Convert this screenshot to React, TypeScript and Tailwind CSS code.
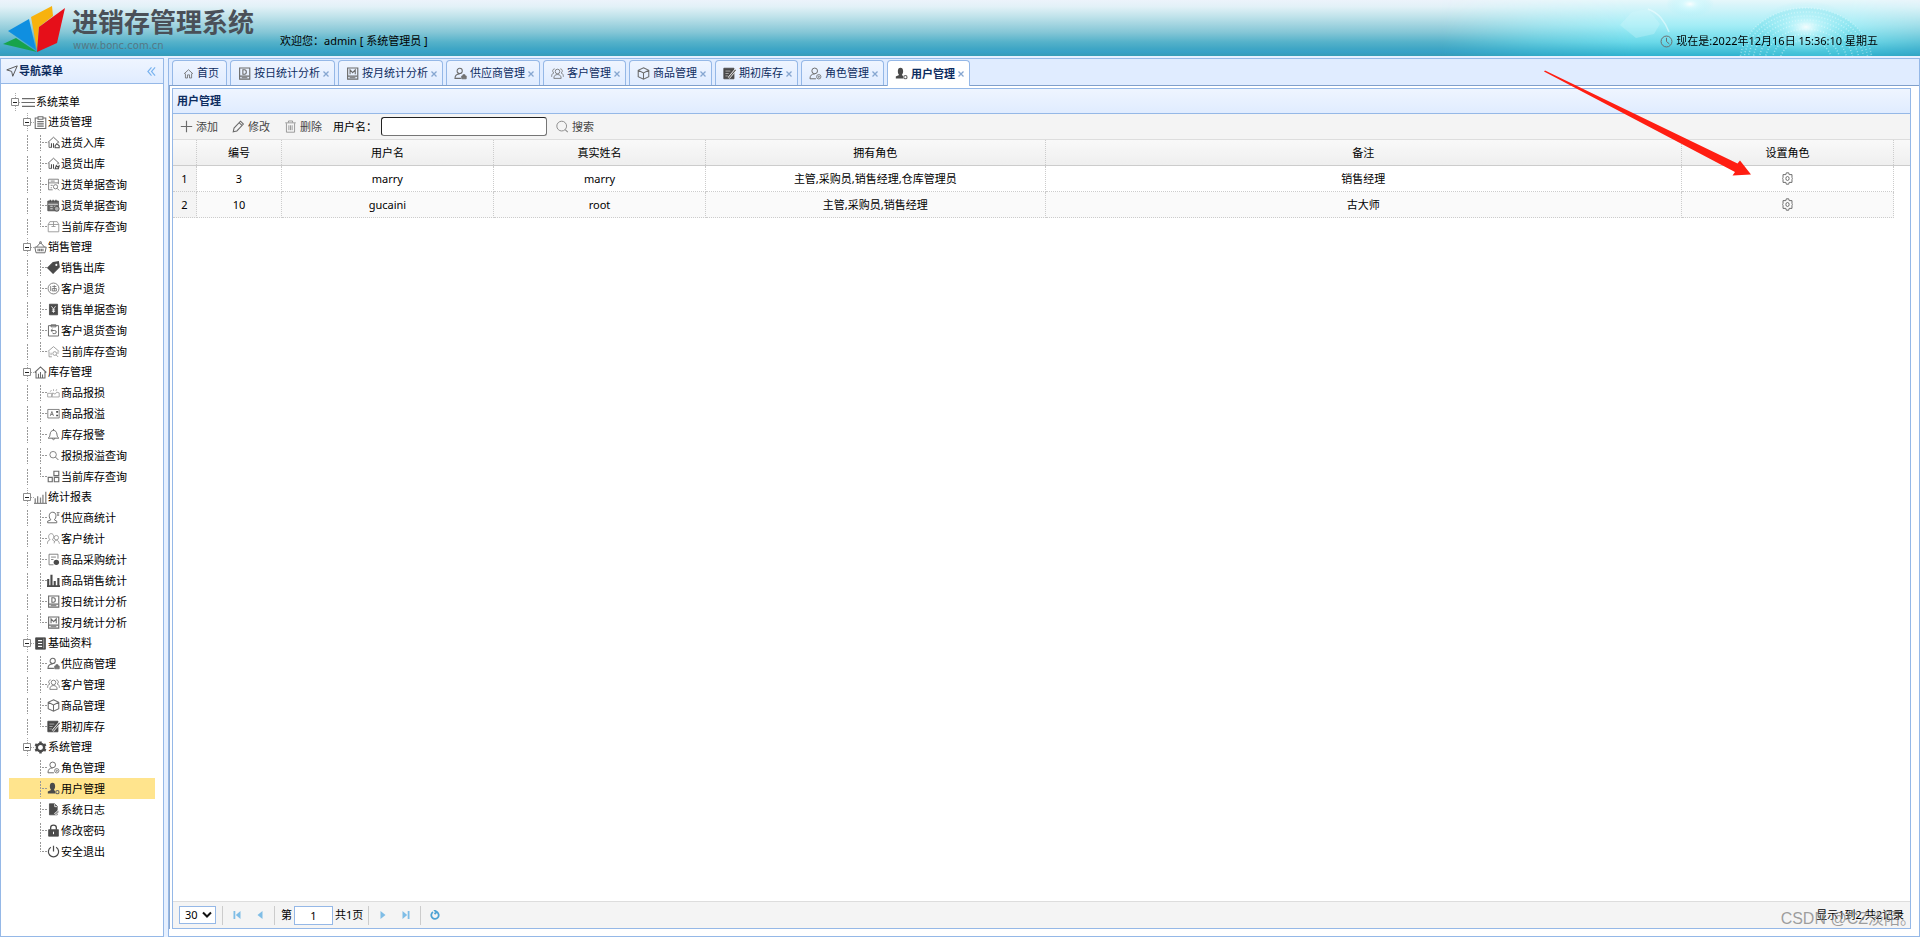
import React from "react";

type IconName =
  | "menu" | "clipboard" | "houseIn" | "houseOut" | "docSearch" | "calendar" | "box" | "basket" | "tag" | "stamp"
  | "yen" | "clipBack" | "houseFind" | "houseBars" | "broken" | "cardA" | "bell" | "search" | "blocks" | "bars"
  | "person" | "people" | "docPie" | "barsBold" | "dayBook" | "monthBook" | "server" | "supplier" | "group" | "cube"
  | "notePen" | "gearBold" | "role" | "userGear" | "log" | "lock" | "power" | "home" | "plus" | "pencil" | "trash"
  | "gear" | "send" | "clock" | "find";

const dark = "#4a4a4a";

const drawings: Record<IconName, React.ReactNode> = {
  menu: <path d="M0 3.200h16M0 8h16M0 12.800h16" strokeWidth="1.500" />,
  clipboard: (
    <>
      <path d="M4.500 2.500h-3v13h13v-13h-3M5 1h6v3H5z" strokeWidth="1.300" />
      <path d="M4 7h8M4 9.700h8M4 12.400h8" strokeWidth="1.400" />
    </>
  ),
  houseIn: (
    <>
      <path d="M1 8 8 1.500 15 8M2.500 7.500V14H5M13.500 7v2" strokeWidth="1.200" />
      <path d="M5.500 9v5.500M8 9v5.500M10 12l2-2.500 3 2.500v2.500h-5z" strokeWidth="1.300" stroke={dark} />
    </>
  ),
  houseOut: (
    <>
      <path d="M1 8 8 1.500 15 8M2.500 7.500V14H5M13.500 7v2" strokeWidth="1.200" />
      <path d="M5.500 9v5.500M8 9v5.500M10 14.500h4l1-3.500-2 1-1.500-1.500z" strokeWidth="1.300" stroke={dark} />
    </>
  ),
  docSearch: (
    <>
      <path d="M14 7.500V1.500H2v13h5M2 6h12M4.500 3.800h5M4.500 9h2.500M4.500 12H6" />
      <circle cx="10.500" cy="10.800" r="2.600" />
      <path d="m12.500 12.800 2.500 2.500" />
    </>
  ),
  calendar: (
    <>
      <path d="M1 2.500h13v12H1z" fill="#6b6b6b" stroke={dark} />
      <path d="M1.500 6.500h12M4 9h3M4 12h3M9 9h2" stroke="#eee" />
      <path d="M4 1v3M7.500 1v3M11 1v3" stroke={dark} strokeWidth="1.500" />
      <circle cx="12" cy="12" r="3" fill="#aaa" stroke={dark} />
    </>
  ),
  box: <path d="M1.500 5.500h13v9h-13zM1.500 5.500l2-3.500h9l2 3.500M8 2v6M5.500 8h5" stroke="#8c8c8c" />,
  basket: (
    <>
      <path d="M1 7.500h14l-1.500 7h-11zM3 7.500 8 2l5 5.500" strokeWidth="1.200" />
      <circle cx="8" cy="1.800" r="1.200" />
      <path d="M5 9.500v3M7 9.500v3M9 9.500v3M11 9.500v3" strokeWidth="1.400" />
    </>
  ),
  tag: (
    <>
      <path d="M7.500 2 14 1l1 6.500L7.500 15 1 8.500z" fill={dark} stroke={dark} strokeWidth="1.500" />
      <circle cx="11.500" cy="4.800" r="1.300" fill="#fff" stroke="none" />
    </>
  ),
  stamp: (
    <>
      <circle cx="8" cy="8" r="6.700" />
      <path d="M4.500 5v6M6.500 5.500h5M6.500 8h5v3h-5zM9 4v7" />
    </>
  ),
  yen: (
    <>
      <path d="M3 1.500h10v13H3z" fill={dark} stroke={dark} />
      <path d="m5.500 4 2.500 3.500L10.500 4M8 7.500V12M6 8.500h4M6 10.300h4" stroke="#fff" />
    </>
  ),
  clipBack: (
    <>
      <path d="M1.800 2h12.400v12.800H1.800zM5 1h6v2.500H5z" strokeWidth="1.200" />
      <path d="M7 6 4.800 8 7 10M5 8h4.500a1.800 1.800 0 0 1 0 3.800H7" strokeWidth="1.200" />
    </>
  ),
  houseFind: (
    <>
      <path d="M1 8 8 2l7 6M2.500 8v6.500H6M13.500 8v3" stroke="#8c8c8c" />
      <circle cx="9.500" cy="10.500" r="2.300" stroke="#8c8c8c" />
      <path d="m11.300 12.300 2.400 2.400M5 9.500v3" stroke="#8c8c8c" />
    </>
  ),
  houseBars: <path d="M.8 8 8 1.200 15.200 8M2.500 7v7.800h11V7M5.500 14V9.500M8 14V7.500M10.500 14v-3.500" strokeWidth="1.300" />,
  broken: <path d="M.8 9h5v4.500h-5zM6 13.500h9V8.500l-3-1-2 2.500-3-1.500zM4 7l1.500-2M8 6V4M11 6l1-2" stroke="#999" />,
  cardA: (
    <>
      <path d="M1 3h14v10.500H1z" />
      <path d="m4 11 2-5.500L8 11M4.700 9.200h2.600" />
      <path d="M12.500 5v2M12.500 9.500v2" stroke={dark} strokeWidth="2.400" />
    </>
  ),
  bell: <path d="M1.500 12.500c2-1.500 2-3 2.300-5C4.200 4.800 5.500 3 8 3s3.800 1.800 4.200 4.500c.3 2 .3 3.500 2.300 5zM8 3V1.200M6.500 12.500c0 2.500 3 2.500 3 0" strokeWidth="1.200" />,
  search: (
    <>
      <circle cx="7.500" cy="7" r="4" />
      <path d="m10.500 10 3.500 3.500" strokeWidth="1.200" />
    </>
  ),
  find: (
    <>
      <circle cx="7" cy="7.500" r="6" stroke="#8c8c8c" strokeWidth="1.200" />
      <path d="m11.300 11.800 3.200 3.200" stroke="#8c8c8c" strokeWidth="1.300" />
    </>
  ),
  blocks: <path d="M1.500 9h5v5.500h-5zM9 9h5.500v5.500H9zM8.500 1.500h6v5.500h-6z" strokeWidth="1.400" />,
  bars: <path d="M1.500 15V9M4.500 15V6.500M8 15V8M11 15V4.500M14.500 15V1M0 15.300h16" strokeWidth="1.600" stroke="#858585" />,
  person: (
    <>
      <path d="M.8 14.500v-2l4-1.700c-1.500-1.300-2-3-2-5C2.800 3 4.500 1.500 7 1.500s4 1.500 4 4.300c0 2-.5 3.700-2 5l3 1.700v2z" strokeWidth="1.200" />
      <path d="M12 2h3.500M12.500 5H15M13.500 2v4" />
    </>
  ),
  people: (
    <>
      <path d="M.5 14.500c0-3 1.200-4.500 3.300-5C2.500 8.500 2 7 2 5.700 2 3.500 3.300 2 5.200 2c1.800 0 3 1.500 3 3.700C8.200 7 7.700 8.500 6.500 9.500c1.500.5 2.500 1.500 2.800 3" stroke="#8c8c8c" />
      <circle cx="11.500" cy="7" r="2.700" stroke="#8c8c8c" />
      <path d="M8.800 14c0-2.500 1-3.500 2.700-3.800 2 .2 3.500 1.500 3.700 4.300" stroke="#8c8c8c" />
    </>
  ),
  docPie: (
    <>
      <path d="M13.500 7V1.500h-11v13H8M5 5h6M5 8h3" />
      <circle cx="11.500" cy="11.500" r="3.300" fill={dark} stroke="none" />
    </>
  ),
  barsBold: <path d="M1.500 15V6M5.500 15V1M9.500 15V8.500M14 15V5M0 15h16" stroke={dark} strokeWidth="2.600" />,
  dayBook: (
    <>
      <path d="M2 1.200h12.500V15H2z" strokeWidth="1.400" />
      <path d="M6 3.500h2c3 0 3 5.500 0 5.500H6zM2 11.200h12M4.500 13.200h7" strokeWidth="1.300" />
    </>
  ),
  monthBook: (
    <>
      <path d="M2 1.200h12.500V15H2z" strokeWidth="1.400" />
      <path d="M5 9V3.500L8.200 7l3.200-3.500V9M2 11.200h12M4.500 13.200h7" strokeWidth="1.300" />
    </>
  ),
  server: (
    <>
      <path d="M2 1h12v14H2z" fill={dark} stroke={dark} />
      <path d="M5 4.500h5M5 8h5M5 11.500h5" stroke="#fff" strokeWidth="1.500" />
      <path d="M12 2v12" stroke="#aaa" />
    </>
  ),
  supplier: (
    <>
      <circle cx="7" cy="4.800" r="3.200" strokeWidth="1.300" />
      <path d="M8.500 14H1.200c0-3.500 2-5.500 5.800-5.500" strokeWidth="1.300" />
      <path d="M9.500 11h5.500v3.500H9.500zM11 11V9.500h2.500V11" fill="#777" />
    </>
  ),
  group: (
    <>
      <circle cx="8" cy="5.500" r="2.800" />
      <path d="M3.500 14c0-3 1.500-4.700 4.500-4.700s4.500 1.700 4.500 4.700zM4.500 2.300c-3 .3-3 4-1 5C1.500 8 .8 9.500.8 12M11.500 2.300c3 .3 3 4 1 5 2 .7 2.700 2.200 2.700 4.700" />
    </>
  ),
  cube: <path d="M8 1 14.500 4v8L8 15 1.500 12V4zM1.500 4 8 7.300 14.500 4M8 7.300V15" strokeWidth="1.300" />,
  notePen: (
    <>
      <path d="M1 1.500h12.500v13H1z" fill={dark} stroke={dark} />
      <path d="M3 5h6M3 8h4M3 11h3" stroke="#bbb" />
      <path d="m7 13.500 8.500-10" stroke="#fff" strokeWidth="3" />
      <path d="m7 13.500 8.500-10" stroke={dark} strokeWidth="1.300" />
    </>
  ),
  gearBold: (
    <>
      <circle cx="8" cy="8" r="4.500" stroke={dark} strokeWidth="3" />
      <path d="M8 .5v3M8 12.500v3M1.500 4.200l2.600 1.500M11.900 10.300l2.600 1.500M1.500 11.800l2.600-1.500M11.900 5.700l2.600-1.500" stroke={dark} strokeWidth="3" />
    </>
  ),
  role: (
    <>
      <circle cx="7" cy="4.800" r="3.500" strokeWidth="1.200" />
      <path d="M8.500 14.500H1.200c0-4 2-6 5.800-6" strokeWidth="1.200" />
      <circle cx="12" cy="12" r="2.700" />
      <circle cx="12" cy="12" r=".8" />
    </>
  ),
  userGear: (
    <>
      <path d="M1 14v-2.200l4-2C3.800 8.600 3.500 7 3.500 5c0-2.500 1.200-4 3.200-4S10 2.500 10 5c0 2-.5 3.500-1.500 4.800L10 11v3z" fill={dark} stroke="none" />
      <circle cx="12.800" cy="12.500" r="2" stroke="#666" strokeWidth="1.400" />
    </>
  ),
  log: (
    <>
      <path d="M3 1h6.500L12.500 4v10.500H3z" fill={dark} stroke={dark} />
      <path d="M9.500 1v3.500h3" stroke="#fff" />
      <path d="m9 13 4.500-4 1.500 2-4 3.800z" fill="#999" stroke="#fff" strokeWidth=".7" />
    </>
  ),
  lock: (
    <>
      <path d="M2 7h12v8H2z" fill={dark} stroke={dark} />
      <path d="M4.500 7V4.500c0-4.300 7-4.300 7 0V7" stroke={dark} strokeWidth="1.600" />
      <path d="M8 9.500v3" stroke="#fff" strokeWidth="1.300" />
    </>
  ),
  power: <path d="M8 1v7M4.800 2.800a6.300 6.300 0 1 0 6.400 0" stroke={dark} strokeWidth="1.500" />,
  home: <path d="M1.500 8.500 8 2.500l6.500 6M3.500 8v6.500h3V10h3v4.500h3V8" strokeWidth="1.200" />,
  plus: <path d="M8 1v14M1 8h14" strokeWidth="1.400" />,
  pencil: <path d="m1.500 14.500 1-4.500 8-8.500 3.500 3.500-8 8.500zM9 3.500l3.300 3.200" strokeWidth="1.300" />,
  trash: <path d="M1.500 3.500h13M5.500 3V1.200h5V3M3 4v11h10V4M6 6.500v6M8 6.500v6M10 6.500v6" stroke="#888" />,
  gear: (
    <>
      <path d="M6 3.200 6.500 1h3l.5 2.200h3.500v3.500L14 8l-.5 1.300v3.500H10L9.500 15h-3L6 12.800H2.500V9.300L2 8l.5-1.300V3.200z" strokeWidth="1.200" />
      <ellipse cx="8" cy="8" rx="2" ry="2.500" strokeWidth="1.200" />
    </>
  ),
  send: <path d="M1 6.500 15 1.200 9 15 7.500 8.500z" strokeWidth="1.300" stroke="#555" />,
  clock: (
    <>
      <circle cx="8" cy="8" r="6.700" strokeWidth="1.200" />
      <path d="M8 3.500V8l3.500 3" strokeWidth="1.200" />
    </>
  ),
};

function Icon({ name, className = "size-[13px]" }: { name: IconName; className?: string }) {
  return (
    <svg viewBox="0 0 16 16" fill="none" stroke="#6b6b6b" aria-hidden="true" className={`shrink-0 ${className}`}>
      {drawings[name]}
    </svg>
  );
}

type Leaf = { icon: IconName; label: string };
type Group = Leaf & { children: Leaf[] };

const tree: Group[] = [
  {
    icon: "clipboard", label: "进货管理", children: [
      { icon: "houseIn", label: "进货入库" },
      { icon: "houseOut", label: "退货出库" },
      { icon: "docSearch", label: "进货单据查询" },
      { icon: "calendar", label: "退货单据查询" },
      { icon: "box", label: "当前库存查询" },
    ],
  },
  {
    icon: "basket", label: "销售管理", children: [
      { icon: "tag", label: "销售出库" },
      { icon: "stamp", label: "客户退货" },
      { icon: "yen", label: "销售单据查询" },
      { icon: "clipBack", label: "客户退货查询" },
      { icon: "houseFind", label: "当前库存查询" },
    ],
  },
  {
    icon: "houseBars", label: "库存管理", children: [
      { icon: "broken", label: "商品报损" },
      { icon: "cardA", label: "商品报溢" },
      { icon: "bell", label: "库存报警" },
      { icon: "search", label: "报损报溢查询" },
      { icon: "blocks", label: "当前库存查询" },
    ],
  },
  {
    icon: "bars", label: "统计报表", children: [
      { icon: "person", label: "供应商统计" },
      { icon: "people", label: "客户统计" },
      { icon: "docPie", label: "商品采购统计" },
      { icon: "barsBold", label: "商品销售统计" },
      { icon: "dayBook", label: "按日统计分析" },
      { icon: "monthBook", label: "按月统计分析" },
    ],
  },
  {
    icon: "server", label: "基础资料", children: [
      { icon: "supplier", label: "供应商管理" },
      { icon: "group", label: "客户管理" },
      { icon: "cube", label: "商品管理" },
      { icon: "notePen", label: "期初库存" },
    ],
  },
  {
    icon: "gearBold", label: "系统管理", children: [
      { icon: "role", label: "角色管理" },
      { icon: "userGear", label: "用户管理" },
      { icon: "log", label: "系统日志" },
      { icon: "lock", label: "修改密码" },
      { icon: "power", label: "安全退出" },
    ],
  },
];

const tabs: Leaf[] = [
  { icon: "home", label: "首页" },
  { icon: "dayBook", label: "按日统计分析" },
  { icon: "monthBook", label: "按月统计分析" },
  { icon: "supplier", label: "供应商管理" },
  { icon: "group", label: "客户管理" },
  { icon: "cube", label: "商品管理" },
  { icon: "notePen", label: "期初库存" },
  { icon: "role", label: "角色管理" },
  { icon: "userGear", label: "用户管理" },
];

const columns = ["编号", "用户名", "真实姓名", "拥有角色", "备注"];

const users = [
  ["3", "marry", "marry", "主管,采购员,销售经理,仓库管理员", "销售经理"],
  ["10", "gucaini", "root", "主管,采购员,销售经理", "古大师"],
];

function Expander() {
  return (
    <svg viewBox="0 0 13 20" className="h-5 w-[13px] shrink-0" fill="none" aria-hidden="true">
      <path d="M6.500 1v5M6.500 14v6M10 10.500h3" stroke="#aaa" strokeDasharray="1 1" />
      <path d="M2.500 6.500h7v7h-7z" stroke="#8c8c8c" fill="#fff" />
      <path d="M4 10.500h4" stroke="#222" />
    </svg>
  );
}

function Guide({ kind }: { kind: "none" | "line" | "tee" | "end" }) {
  return (
    <svg viewBox="0 0 13 21" className="h-[21px] w-[13px] shrink-0" fill="none" stroke="#999" strokeDasharray="2 1" aria-hidden="true">
      {kind === "line" && <path d="M6.500 3v16" />}
      {kind === "tee" && <path d="M6.500 3v16M8 10.500h5" />}
      {kind === "end" && <path d="M6.500 1v10M8 10.500h5" />}
    </svg>
  );
}

function Logo() {
  return (
    <svg viewBox="0 0 64 48" className="h-12 w-16 shrink-0" aria-hidden="true">
      <path d="M0 40 13 34 34 48z" fill="#17a34c" />
      <path d="M5 27 26 15 33 46z" fill="#0f8fe0" />
      <path d="M28 13 49 2 50 12 36 23 34 46z" fill="#f8b20d" />
      <path d="M36 23 62 4 54 39 34 48z" fill="#e60f19" />
    </svg>
  );
}

function Globe() {
  return (
    <svg viewBox="0 0 480 56" preserveAspectRatio="xMaxYMid slice" className="absolute inset-y-0 right-0 h-14 w-[480px]" aria-hidden="true">
      <defs>
        <linearGradient id="sky" x1="0" y1="0" x2="0" y2="1">
          <stop offset="0" stopColor="#e6f7fb" />
          <stop offset=".45" stopColor="#a4edf6" />
          <stop offset=".75" stopColor="#6bd9e9" />
          <stop offset="1" stopColor="#2fb2cf" />
        </linearGradient>
        <linearGradient id="fade" x1="0" y1="0" x2="1" y2="0">
          <stop offset="0" stopColor="#fff" stopOpacity="0" />
          <stop offset=".2" stopColor="#fff" stopOpacity=".6" />
          <stop offset=".4" stopColor="#fff" />
          <stop offset=".85" stopColor="#fff" />
          <stop offset="1" stopColor="#fff" stopOpacity=".45" />
        </linearGradient>
        <radialGradient id="glow">
          <stop offset="0" stopColor="#fff" stopOpacity=".9" />
          <stop offset=".3" stopColor="#d6fbff" stopOpacity=".6" />
          <stop offset="1" stopColor="#9df0fa" stopOpacity="0" />
        </radialGradient>
        <mask id="edge"><path d="M0 0h480v56H0z" fill="url(#fade)" /></mask>
      </defs>
      <g mask="url(#edge)">
        <path d="M0 0h480v56H0z" fill="url(#sky)" />
        <path d="M180 25 192 12 208 9 220 24 214 34 196 38z" fill="#d6f7fb" opacity=".3" />
        <path d="M208 9q8 3 13 9t8 14" fill="none" stroke="#f2feff" strokeWidth="1.500" opacity=".55" />
        <ellipse cx="250" cy="4" rx="24" ry="13" fill="url(#glow)" />
        <ellipse cx="366" cy="62" rx="66" ry="54" fill="#5fd6e6" opacity=".3" />
        <ellipse cx="366" cy="27" rx="46" ry="26" fill="url(#glow)" />
        <g fill="none" stroke="#e9fdff" strokeWidth="1.500" strokeDasharray="1 2" opacity=".5">
          <ellipse cx="366" cy="62" rx="66" ry="54" />
          <ellipse cx="366" cy="62" rx="62" ry="50" />
          <ellipse cx="366" cy="62" rx="58" ry="46" />
          <ellipse cx="366" cy="62" rx="53" ry="42" />
          <ellipse cx="366" cy="62" rx="47" ry="38" />
          <ellipse cx="366" cy="62" rx="41" ry="33" />
          <ellipse cx="366" cy="62" rx="34" ry="28" />
          <ellipse cx="366" cy="62" rx="26" ry="22" />
        </g>
      </g>
    </svg>
  );
}

function Separator() {
  return <span className="h-[19px] w-px bg-[#ccc]" />;
}

function PageButton({ label, outline, d }: { label: string; outline?: boolean; d: string }) {
  return (
    <button type="button" aria-label={label} className="flex size-5 items-center justify-center">
      <svg viewBox="0 0 10 10" className="size-[10px]" fill={outline ? "none" : "#7fbde6"} stroke={outline ? "#4da3d4" : "none"} strokeWidth="1.800" aria-hidden="true">
        <path d={d} />
      </svg>
    </button>
  );
}

function Header() {
  return (
    <header className="relative flex h-14 shrink-0 items-center bg-[linear-gradient(#ecf3fb_0%,#e2f1f7_12%,#bfe2ea_30%,#84c6d6_58%,#55b2ca_75%,#3fa6c5_87%,#37a1c8_93%,#369cb6_100%)] pr-[42px] pl-[3px]">
      <Globe />
      <Logo />
      <div className="relative ml-[5px] flex flex-col pt-1">
        <h1 className="text-[26px] leading-8 font-bold text-[#4a5058]">进销存管理系统</h1>
        <span className="pl-px font-['DejaVu_Sans'] text-[10px] leading-4 text-[#557884]">www.bonc.com.cn</span>
      </div>
      <p className="relative ml-[26px] pt-[26px] leading-4">欢迎您：admin [ 系统管理员 ]</p>
      <p className="relative ml-auto flex items-center gap-[3px] pt-[26px] leading-4">
        <Icon name="clock" />
        现在是:2022年12月16日 15:36:10 星期五
      </p>
    </header>
  );
}

function Sidebar() {
  return (
    <aside className="flex w-[164px] shrink-0 flex-col border border-[#95b8e7] bg-white">
      <div className="flex h-[25px] items-center border-b border-[#95b8e7] bg-linear-to-b from-[#eff5ff] to-[#e0ecff] pr-[7px] pl-[5px]">
        <Icon name="send" className="size-[12px]" />
        <h2 className="ml-px font-bold text-[#0e2d5f]">导航菜单</h2>
        <button type="button" aria-label="收起" className="ml-auto">
          <svg viewBox="0 0 10 10" className="size-[9px]" fill="none" stroke="#7ab3ef" strokeWidth="1.300" aria-hidden="true">
            <path d="M5 .5 1 5l4 4.500M9 .5 5 5l4 4.500" />
          </svg>
        </button>
      </div>
      <nav className="px-2 pt-2">
        <div className="flex h-5 items-center">
          <Expander />
          <Icon name="menu" />
          <span className="ml-px">系统菜单</span>
        </div>
        <ul>
          {tree.map((group, g) => (
            <li key={group.label}>
              <div className="flex h-5 items-center pl-3">
                <Expander />
                <Icon name={group.icon} />
                <span className="ml-px">{group.label}</span>
              </div>
              <ul>
                {group.children.map((leaf, i) => (
                  <li key={leaf.label}>
                    <a
                      href="#"
                      className={
                        g === tree.length - 1 && i === 1
                          ? "flex h-[21px] items-center bg-[#ffe48d] pl-3"
                          : "flex h-[21px] items-center pl-3"
                      }
                    >
                      <Guide kind={g === tree.length - 1 ? "none" : "line"} />
                      <Guide kind={i === group.children.length - 1 ? "end" : "tee"} />
                      <Icon name={leaf.icon} />
                      <span className="ml-px">{leaf.label}</span>
                    </a>
                  </li>
                ))}
              </ul>
            </li>
          ))}
        </ul>
      </nav>
    </aside>
  );
}

function tabClass(index: number) {
  if (index === 0) {
    return "flex h-[25px] items-center rounded-t border border-b-0 border-[#95b8e7] bg-linear-to-b from-[#eff5ff] to-[#e0ecff] px-[7px] text-[#0e2d5f]";
  }
  if (index === tabs.length - 1) {
    return "-mb-px flex h-[26px] items-center rounded-t border border-b-0 border-[#95b8e7] bg-white px-1 font-bold text-[#0e2d5f]";
  }
  return "flex h-[25px] items-center rounded-t border border-b-0 border-[#95b8e7] bg-linear-to-b from-[#eff5ff] to-[#e0ecff] px-1 text-[#0e2d5f]";
}

function TabBar() {
  return (
    <div className="flex h-[27px] shrink-0 items-end gap-[3px] border-b border-[#7f9fcb] bg-[#e0ecff] pl-[3px]">
      {tabs.map((tab, i) => (
        <div key={tab.label} className={tabClass(i)}>
          <button type="button" className="flex items-center gap-[3px] pl-[3px]">
            <Icon name={tab.icon} className={i === 0 ? "size-[11px]" : "size-[13px]"} />
            {tab.label}
          </button>
          {i > 0 && (
            <button type="button" aria-label={`关闭 ${tab.label}`} className="ml-[2px] pt-px">
              <svg viewBox="0 0 8 8" className="size-2" fill="none" stroke="#86a6d0" strokeWidth="1.300" aria-hidden="true">
                <path d="m1.500 1.500 5 5M6.500 1.500l-5 5" />
              </svg>
            </button>
          )}
        </div>
      ))}
    </div>
  );
}

function Toolbar() {
  const actions: Leaf[] = [
    { icon: "plus", label: "添加" },
    { icon: "pencil", label: "修改" },
    { icon: "trash", label: "删除" },
  ];
  return (
    <div className="flex h-[26px] shrink-0 items-center border-b border-[#ddd] bg-[#f4f4f4] pl-[7px]">
      {actions.map((action) => (
        <button key={action.label} type="button" className="mr-[14px] flex items-center gap-[3px] text-[#444]">
          <Icon name={action.icon} />
          {action.label}
        </button>
      ))}
      <label htmlFor="username" className="mr-1 -ml-[3px] w-11 whitespace-nowrap">用户名：</label>
      <input id="username" type="text" className="h-[19px] w-[166px] rounded-[3px] border border-[#767676] border-t-[#222] border-l-[#222] bg-white px-1" />
      <button type="button" className="ml-[9px] flex items-center gap-[3px] text-[#444]">
        <Icon name="find" />
        搜索
      </button>
    </div>
  );
}

const rowGrid = "grid grid-cols-[24px_2fr_5fr_5fr_8fr_15fr_5fr_16px]";
const dotted = "flex items-center justify-center border-r border-dotted border-[#ccc] font-normal";

function UserTable() {
  return (
    <table className="block w-full">
      <thead className="block">
        <tr className={`${rowGrid} h-[26px] border-b border-[#ccc] bg-linear-to-b from-[#f9f9f9] to-[#efefef]`}>
          <th className={dotted} />
          {columns.map((column) => (
            <th key={column} scope="col" className={dotted}>{column}</th>
          ))}
          <th scope="col" className={dotted}>设置角色</th>
        </tr>
      </thead>
      <tbody className="block">
        {users.map((user, i) => (
          <tr key={user[0]} className={`${rowGrid} h-[26px]`}>
            <td className={`${dotted} border-b bg-[#f4f4f4]`}>{i + 1}</td>
            {user.map((value, c) => (
              <td key={c} className={`${dotted} border-b ${i === 1 ? "bg-[#fafafa]" : "bg-white"}`}>{value}</td>
            ))}
            <td className={`${dotted} border-b ${i === 1 ? "bg-[#fafafa]" : "bg-white"}`}>
              <button type="button" aria-label="设置角色">
                <Icon name="gear" />
              </button>
            </td>
          </tr>
        ))}
      </tbody>
    </table>
  );
}

function Pager() {
  return (
    <div className="flex h-[27px] shrink-0 items-center border-t border-[#ddd] bg-[#f4f4f4] pr-[6px] pl-[6px]">
      <div className="relative mr-[6px] flex">
        <select aria-label="每页条数" defaultValue="30" className="h-[18px] w-[37px] appearance-none border border-[#95b8e7] bg-white pl-[5px] leading-4">
          <option>30</option>
        </select>
        <svg viewBox="0 0 10 8" className="pointer-events-none absolute top-[5px] right-[4px] h-2 w-[10px]" fill="none" stroke="#111" strokeWidth="2" aria-hidden="true">
          <path d="m1 1.500 4 4 4-4" />
        </svg>
      </div>
      <Separator />
      <div className="flex gap-[3px] px-1">
        <PageButton label="首页" d="M1.500 1h1.800v8H1.500zM8.500 1v8L3.800 5z" />
        <PageButton label="上一页" d="M7.500 1v8L2.500 5z" />
      </div>
      <Separator />
      <label className="mr-[5px] ml-[6px] flex items-center gap-[2px]">
        第
        <input type="text" defaultValue="1" className="h-[19px] w-[39px] border border-[#95b8e7] bg-white text-center" />
        共1页
      </label>
      <Separator />
      <div className="flex gap-[3px] px-1">
        <PageButton label="下一页" d="M2.500 1v8l5-4z" />
        <PageButton label="末页" d="M6.700 1h1.800v8H6.700zM1.500 1v8l4.700-4z" />
      </div>
      <Separator />
      <div className="flex px-1">
        <PageButton label="刷新" outline d="M6.800 2A3.700 3.700 0 1 1 3 2.100M4 0l2.800 1.900L4.500 4" />
      </div>
      <span className="ml-auto">显示1到2,共2记录</span>
    </div>
  );
}

export default function App() {
  return (
    <div className="relative flex h-screen min-h-[880px] flex-col bg-[#e6f0ff] font-['Noto_Sans','Noto_Sans_CJK_SC',sans-serif] text-[11px] leading-4 text-black">
      <Header />
      <div className="flex min-h-0 grow gap-1 pt-[2px]">
        <Sidebar />
        <main className="flex min-w-0 grow flex-col border border-[#95b8e7] bg-white">
          <TabBar />
          <div className="mr-2 mb-[7px] flex min-h-0 grow flex-col border-l border-[#8fa9cc] pt-[2px] pl-[2px]">
            <section className="flex min-h-0 grow flex-col border border-[#95b8e7]">
              <h2 className="flex h-[25px] shrink-0 items-center border-b border-[#95b8e7] bg-linear-to-b from-[#eff5ff] to-[#e0ecff] pl-1 font-bold text-[#0e2d5f]">
                用户管理
              </h2>
              <Toolbar />
              <div className="min-h-0 grow">
                <UserTable />
              </div>
              <Pager />
            </section>
          </div>
        </main>
      </div>
      <svg viewBox="0 0 208 106" className="pointer-events-none absolute top-[70px] right-[168px] h-[106px] w-[208px]" fill="#ff1e12" aria-hidden="true">
        <path d="M0 1.500 1 .5 193.500 93.500 196 90.500 207 104.500 188.500 105.500 191 102z" />
      </svg>
      <span className="pointer-events-none absolute right-1 bottom-2 font-['Liberation_Sans','Noto_Sans_CJK_SC',sans-serif] text-[16px] leading-5 text-[#808080]/75">
        CSDN @CZ淡陌。
      </span>
    </div>
  );
}
